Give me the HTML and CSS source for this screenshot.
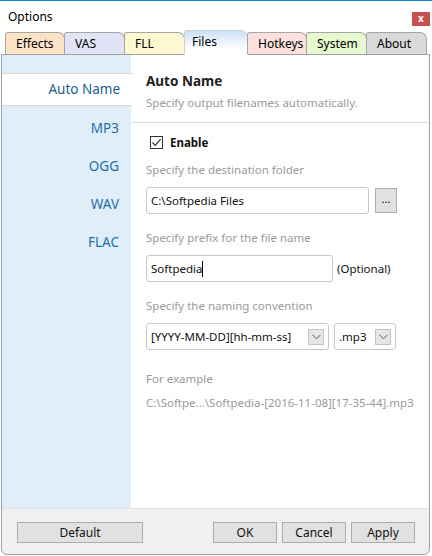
FILE: index.html
```html
<!DOCTYPE html>
<html lang="en">
<head>
    <meta charset="UTF-8">
    <title>Options</title>
    <link rel="stylesheet" href="styles.css">
</head>
<body>
    <div class="window">
        <!-- Title bar -->
        <div class="title-bar">
            <span class="title">Options</span>
            <span class="close-btn">x</span>
        </div>

        <!-- Tabs -->
        <div class="tabs">
            <div class="tab tab-effects">Effects</div>
            <div class="tab tab-vas">VAS</div>
            <div class="tab tab-fll">FLL</div>
            <div class="tab tab-files active">Files</div>
            <div class="tab tab-hotkeys">Hotkeys</div>
            <div class="tab tab-system">System</div>
            <div class="tab tab-about">About</div>
        </div>

        <!-- Tab page -->
        <div class="panel">
            <div class="panel-body">
                <div class="sidebar">
                    <div class="side-item selected">Auto Name</div>
                    <div class="side-item">MP3</div>
                    <div class="side-item">OGG</div>
                    <div class="side-item">WAV</div>
                    <div class="side-item">FLAC</div>
                </div>

                <div class="content">
                    <div class="content-head">
                        <div class="heading">Auto Name</div>
                        <div class="subtitle">Specify output filenames automatically.</div>
                    </div>

                    <div class="form">
                        <div class="check-row">
                            <span class="checkbox">
                                <svg width="11" height="11" viewBox="0 0 11 11"><path d="M1.5 5.5 L4.2 8.3 L9.6 2.2" fill="none" stroke="#333" stroke-width="1.2"/></svg>
                            </span>
                            <span class="check-label">Enable</span>
                        </div>

                        <div class="label">Specify the destination folder</div>
                        <div class="field-row">
                            <div class="input input-folder">C:\Softpedia Files</div>
                            <div class="browse-btn">...</div>
                        </div>

                        <div class="label">Specify prefix for the file name</div>
                        <div class="field-row">
                            <div class="input input-prefix">Softpedia<span class="caret"></span></div>
                            <span class="optional">(Optional)</span>
                        </div>

                        <div class="label">Specify the naming convention</div>
                        <div class="field-row">
                            <div class="input select select-pattern">
                                <span>[YYYY-MM-DD][hh-mm-ss]</span>
                                <span class="drop-arrow"><svg width="9" height="6" viewBox="0 0 9 6"><path d="M0.5 0.8 L4.5 4.8 L8.5 0.8" fill="none" stroke="#555" stroke-width="1"/></svg></span>
                            </div>
                            <div class="input select select-ext">
                                <span>.mp3</span>
                                <span class="drop-arrow"><svg width="9" height="6" viewBox="0 0 9 6"><path d="M0.5 0.8 L4.5 4.8 L8.5 0.8" fill="none" stroke="#555" stroke-width="1"/></svg></span>
                            </div>
                        </div>

                        <div class="label label-example">For example</div>
                        <div class="example">C:\Softpe...\Softpedia-[2016-11-08][17-35-44].mp3</div>
                    </div>
                </div>
            </div>

            <div class="footer">
                <div class="btn btn-default">Default</div>
                <div class="footer-right">
                    <div class="btn">OK</div>
                    <div class="btn">Cancel</div>
                    <div class="btn">Apply</div>
                </div>
            </div>
        </div>
    </div>
</body>
</html>
```

FILE: styles.css
```css
body {
    margin: 0;
    padding: 0;
    font-family: "Noto Sans", "Open Sans", sans-serif;
    font-size: 11.5px;
    color: #000;
    background: #fff;
}

.window {
    width: 432px;
    height: 556px;
    box-sizing: border-box;
    border-top: 1px solid #1883d7;
    background: #fff;
    display: flex;
    flex-direction: column;
}

/* Title bar */
.title-bar {
    height: 30px;
    display: flex;
    align-items: center;
    justify-content: space-between;
    padding: 0 2px 0 8px;
}

.title {
    font-size: 12px;
}

.close-btn {
    width: 18px;
    height: 14px;
    margin-top: 5px;
    background: #c75050;
    color: #fff;
    font-size: 10px;
    font-weight: bold;
    line-height: 13px;
    text-align: center;
}

/* Tabs */
.tabs {
    display: flex;
    align-items: flex-end;
    padding-left: 5px;
    height: 23px;
    position: relative;
    z-index: 1;
}

.tab {
    box-sizing: border-box;
    width: 60px;
    height: 22px;
    padding-left: 10px;
    border: 1px solid #a5a5a5;
    border-bottom: none;
    border-radius: 3px 7px 0 0;
    line-height: 21px;
    font-size: 12px;
    margin-right: -1px;
}

.tab-effects { width: 60px; background: #fde3c6; }
.tab-vas { width: 61px; background: #e3e3f7; }
.tab-fll { width: 61px; background: #fdf8cf; }
.tab-hotkeys { width: 60px; background: #fde1de; }
.tab-system { width: 61px; background: #e7f9cf; }
.tab-about { width: 61px; background: #dadada; }

.tab.active {
    width: 64px;
    height: 25px;
    padding-left: 7px;
    line-height: 22px;
    border-color: #d0d0d0;
    background: linear-gradient(#cce2f6, #ffffff 75%);
    margin-bottom: -1px;
}

/* Tab page */
.panel {
    flex: 1;
    margin: 0 2px 1px 1px;
    border: 1px solid #a0a0a0;
    border-radius: 0 0 6px 6px;
    display: flex;
    flex-direction: column;
    overflow: hidden;
    background: #f0f0f0;
}

.panel-body {
    height: 453px;
    display: flex;
    background: #fff;
    border-bottom: 1px solid #e3e3e3;
}

.sidebar {
    width: 129px;
    background: #dfeef8;
    padding-top: 18px;
    display: flex;
    flex-direction: column;
    gap: 6px;
}

.side-item {
    height: 32px;
    line-height: 32px;
    text-align: right;
    padding-right: 12px;
    font-size: 13.5px;
    color: #1f6ea8;
}

.side-item.selected {
    background: #fff;
    color: #1a5f92;
    border-top: 1px solid #d8d8d8;
    border-bottom: 1px solid #d8d8d8;
    height: 31px;
    line-height: 31px;
    margin-right: -1px;
}

.content {
    flex: 1;
}

.content-head {
    padding: 16px 15px 0;
    border-bottom: 1px solid #dcdcdc;
    height: 51px;
}

.heading {
    font-weight: bold;
    font-size: 13.5px;
    line-height: 20px;
    color: #222;
}

.subtitle {
    margin-top: 3px;
    line-height: 18px;
    color: #9a9a9a;
}

.form {
    padding: 10px 0 0 15px;
}

.check-row {
    display: flex;
    align-items: center;
    height: 18px;
    padding-left: 4px;
}

.checkbox {
    box-sizing: border-box;
    width: 13px;
    height: 13px;
    border: 1px solid #333;
    display: flex;
    align-items: center;
    justify-content: center;
    margin-right: 7px;
}

.check-label {
    font-weight: bold;
    color: #111;
}

.label {
    margin-top: 10px;
    line-height: 18px;
    color: #9a9a9a;
}

.field-row + .label {
    margin-top: 15px;
}

.field-row {
    display: flex;
    align-items: center;
    margin-top: 8px;
}

.input {
    box-sizing: border-box;
    height: 27px;
    border: 1px solid #c8c8c8;
    border-radius: 3px;
    padding-left: 4px;
    line-height: 25px;
    background: #fff;
    color: #111;
}

.input-folder {
    width: 223px;
}

.browse-btn {
    box-sizing: border-box;
    width: 22px;
    height: 25px;
    margin-left: 6px;
    background: #e1e1e1;
    border: 1px solid #adadad;
    text-align: center;
    line-height: 20px;
    font-size: 11px;
}

.input-prefix {
    width: 187px;
    display: flex;
    align-items: center;
}

.caret {
    width: 1px;
    height: 16px;
    background: #000;
}

.optional {
    margin-left: 4px;
    margin-top: -1px;
    color: #111;
}

.select {
    display: flex;
    align-items: center;
    justify-content: space-between;
    padding-right: 4px;
}

.select-pattern {
    width: 183px;
}

.select-ext {
    width: 62px;
    margin-left: 5px;
}

.drop-arrow {
    box-sizing: border-box;
    width: 16px;
    height: 16px;
    border: 1px solid #c4c4c4;
    background: #e6e6e6;
    display: flex;
    align-items: center;
    justify-content: center;
}

.label-example {
    margin-top: 20px !important;
}

.example {
    margin-top: 6px;
    line-height: 18px;
    color: #9a9a9a;
}

/* Footer buttons */
.footer {
    flex: 1;
    display: flex;
    justify-content: space-between;
    align-items: flex-start;
    padding: 13px 14px 0 15px;
    font-size: 12px;
}

.footer-right {
    display: flex;
    gap: 5px;
}

.btn {
    box-sizing: border-box;
    width: 64px;
    height: 21px;
    background: #e1e1e1;
    border: 1px solid #adadad;
    text-align: center;
    line-height: 19px;
    color: #111;
}

.btn-default {
    width: 126px;
}
```
